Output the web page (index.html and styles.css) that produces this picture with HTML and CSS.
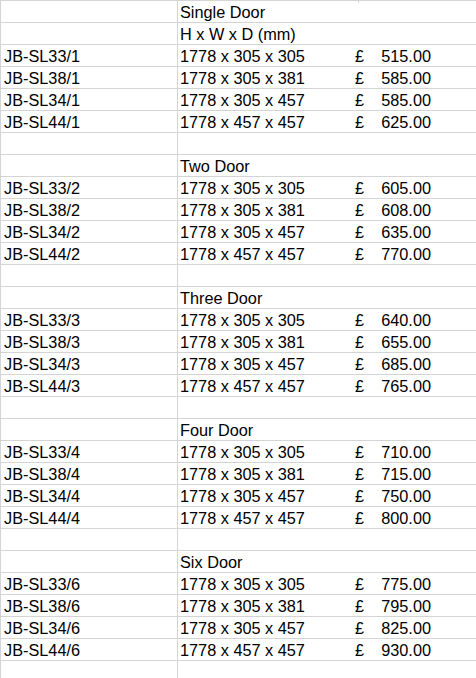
FILE: index.html
```html
<!DOCTYPE html>
<html>
<head>
<meta charset="utf-8">
<link rel="stylesheet" href="styles.css">
</head>
<body>
<div class="sheet">
  <span class="tick"></span>
  <div class="row"><div class="a"></div><div class="b">Single Door</div><div class="c"></div></div>
  <div class="row"><div class="a"></div><div class="b">H x W x D (mm)</div><div class="c"></div></div>
  <div class="row"><div class="a">JB-SL33/1</div><div class="b">1778 x 305 x 305</div><div class="c"><span>£</span><span>515.00</span></div></div>
  <div class="row"><div class="a">JB-SL38/1</div><div class="b">1778 x 305 x 381</div><div class="c"><span>£</span><span>585.00</span></div></div>
  <div class="row"><div class="a">JB-SL34/1</div><div class="b">1778 x 305 x 457</div><div class="c"><span>£</span><span>585.00</span></div></div>
  <div class="row"><div class="a">JB-SL44/1</div><div class="b">1778 x 457 x 457</div><div class="c"><span>£</span><span>625.00</span></div></div>
  <div class="row"><div class="a"></div><div class="b"></div><div class="c"></div></div>
  <div class="row"><div class="a"></div><div class="b">Two Door</div><div class="c"></div></div>
  <div class="row"><div class="a">JB-SL33/2</div><div class="b">1778 x 305 x 305</div><div class="c"><span>£</span><span>605.00</span></div></div>
  <div class="row"><div class="a">JB-SL38/2</div><div class="b">1778 x 305 x 381</div><div class="c"><span>£</span><span>608.00</span></div></div>
  <div class="row"><div class="a">JB-SL34/2</div><div class="b">1778 x 305 x 457</div><div class="c"><span>£</span><span>635.00</span></div></div>
  <div class="row"><div class="a">JB-SL44/2</div><div class="b">1778 x 457 x 457</div><div class="c"><span>£</span><span>770.00</span></div></div>
  <div class="row"><div class="a"></div><div class="b"></div><div class="c"></div></div>
  <div class="row"><div class="a"></div><div class="b">Three Door</div><div class="c"></div></div>
  <div class="row"><div class="a">JB-SL33/3</div><div class="b">1778 x 305 x 305</div><div class="c"><span>£</span><span>640.00</span></div></div>
  <div class="row"><div class="a">JB-SL38/3</div><div class="b">1778 x 305 x 381</div><div class="c"><span>£</span><span>655.00</span></div></div>
  <div class="row"><div class="a">JB-SL34/3</div><div class="b">1778 x 305 x 457</div><div class="c"><span>£</span><span>685.00</span></div></div>
  <div class="row"><div class="a">JB-SL44/3</div><div class="b">1778 x 457 x 457</div><div class="c"><span>£</span><span>765.00</span></div></div>
  <div class="row"><div class="a"></div><div class="b"></div><div class="c"></div></div>
  <div class="row"><div class="a"></div><div class="b">Four Door</div><div class="c"></div></div>
  <div class="row"><div class="a">JB-SL33/4</div><div class="b">1778 x 305 x 305</div><div class="c"><span>£</span><span>710.00</span></div></div>
  <div class="row"><div class="a">JB-SL38/4</div><div class="b">1778 x 305 x 381</div><div class="c"><span>£</span><span>715.00</span></div></div>
  <div class="row"><div class="a">JB-SL34/4</div><div class="b">1778 x 305 x 457</div><div class="c"><span>£</span><span>750.00</span></div></div>
  <div class="row"><div class="a">JB-SL44/4</div><div class="b">1778 x 457 x 457</div><div class="c"><span>£</span><span>800.00</span></div></div>
  <div class="row"><div class="a"></div><div class="b"></div><div class="c"></div></div>
  <div class="row"><div class="a"></div><div class="b">Six Door</div><div class="c"></div></div>
  <div class="row"><div class="a">JB-SL33/6</div><div class="b">1778 x 305 x 305</div><div class="c"><span>£</span><span>775.00</span></div></div>
  <div class="row"><div class="a">JB-SL38/6</div><div class="b">1778 x 305 x 381</div><div class="c"><span>£</span><span>795.00</span></div></div>
  <div class="row"><div class="a">JB-SL34/6</div><div class="b">1778 x 305 x 457</div><div class="c"><span>£</span><span>825.00</span></div></div>
  <div class="row"><div class="a">JB-SL44/6</div><div class="b">1778 x 457 x 457</div><div class="c"><span>£</span><span>930.00</span></div></div>
  <div class="row"><div class="a"></div><div class="b"></div><div class="c"></div></div>
</div>
</body>
</html>
```

FILE: styles.css
```css
html, body {
  margin: 0;
  padding: 0;
  background: #ffffff;
}
body {
  width: 476px;
  height: 678px;
  overflow: hidden;
  font-family: "Liberation Sans", Arial, sans-serif;
  font-size: 16.3px;
  color: #000000;
}
.sheet {
  position: relative;
  border-top: 1px solid #d4d4d4;
  border-left: 1px solid #d4d4d4;
}
.tick {
  position: absolute;
  left: 357px;
  top: 0;
  width: 1px;
  height: 2px;
  background: #d4d4d4;
}
.row {
  display: grid;
  grid-template-columns: 176px 177px 77px 1fr;
  height: 22px;
  box-sizing: border-box;
  border-bottom: 1px solid #d4d4d4;
}
.row > div {
  box-sizing: border-box;
  height: 21px;
  padding-top: 1px;
  line-height: 21px;
  white-space: nowrap;
}
.a {
  padding-left: 3px;
}
.b {
  border-left: 1px solid #d4d4d4;
  padding-left: 2px;
}
.c {
  display: flex;
  justify-content: space-between;
  padding-left: 1px;
}
```
